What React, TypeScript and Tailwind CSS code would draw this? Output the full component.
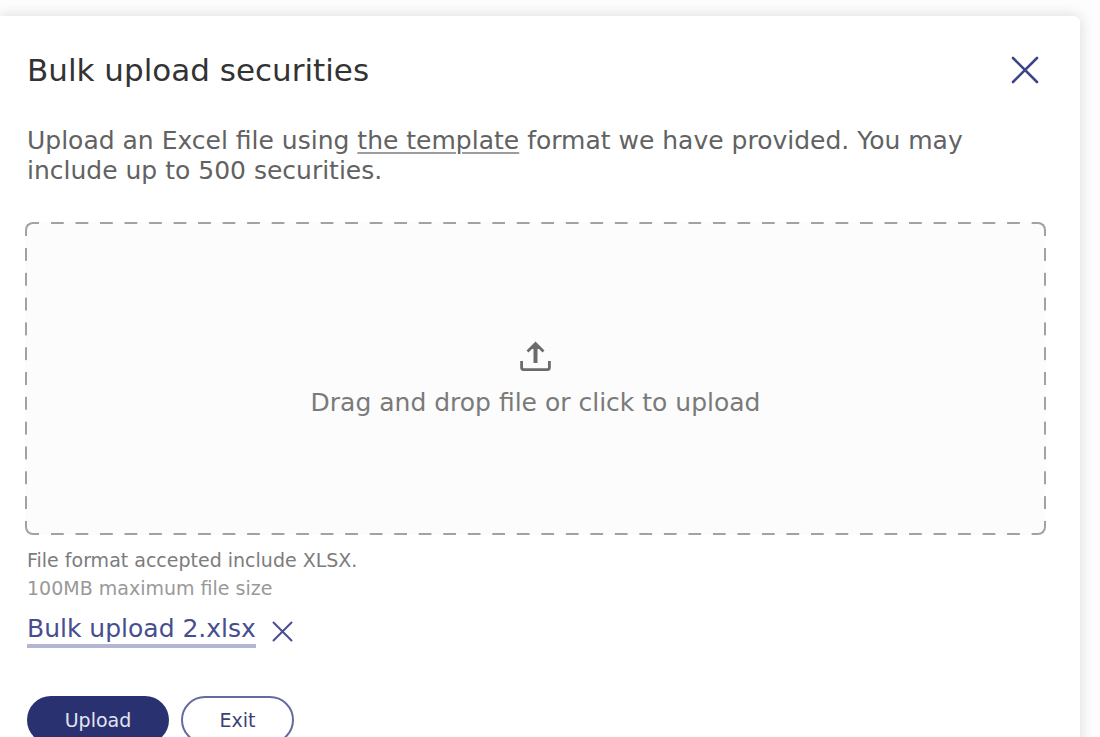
import React from "react";

function CrossIcon({ className }: { className: string }) {
  return (
    <svg viewBox="0 0 28 28" fill="none" stroke="currentColor" className={className} aria-hidden="true">
      <path d="M2 2L26 26M26 2L2 26" strokeWidth="2.6" strokeLinecap="round" />
    </svg>
  );
}

function UploadIcon() {
  return (
    <svg
      viewBox="0 0 32 32"
      fill="none"
      stroke="currentColor"
      strokeWidth="2.8"
      className="h-8 w-8 text-[#6b6b6b]"
      aria-hidden="true"
    >
      <path d="M1.6 21V27.5Q1.6 29.6 3.7 29.6H27.3Q29.4 29.6 29.4 27.5V21" />
      <path d="M15.5 23V4" strokeWidth="4" />
      <path d="M7.5 11.5L15.5 3.5L23.5 11.5" />
      <path d="M11 8.5L15.5 3.5L20 8.5Z" fill="currentColor" strokeWidth="1" />
    </svg>
  );
}

function DashedOutline() {
  return (
    <span aria-hidden="true" className="pointer-events-none absolute inset-0">
      <span className="absolute top-0 left-0 h-[14px] w-[14px] rounded-tl-lg border-t-2 border-l-2 border-[#a2a2a2]" />
      <span className="absolute top-0 right-0 h-[14px] w-[14px] rounded-tr-lg border-t-2 border-r-2 border-[#a2a2a2]" />
      <span className="absolute bottom-0 left-0 h-[14px] w-[14px] rounded-bl-lg border-b-2 border-l-2 border-[#a2a2a2]" />
      <span className="absolute right-0 bottom-0 h-[14px] w-[14px] rounded-br-lg border-b-2 border-r-2 border-[#a2a2a2]" />
      <span className="absolute top-0 right-[14px] left-[26px] h-[2px] bg-[linear-gradient(to_right,#a2a2a2_52%,transparent_52%)] bg-[length:2.5%_100%]" />
      <span className="absolute right-[14px] bottom-0 left-[26px] h-[2px] bg-[linear-gradient(to_right,#a2a2a2_52%,transparent_52%)] bg-[length:2.5%_100%]" />
      <span className="absolute top-[26px] bottom-[14px] left-0 w-[2px] bg-[linear-gradient(to_bottom,#a2a2a2_52%,transparent_52%)] bg-[length:100%_25px] bg-repeat-round" />
      <span className="absolute top-[26px] right-0 bottom-[14px] w-[2px] bg-[linear-gradient(to_bottom,#a2a2a2_52%,transparent_52%)] bg-[length:100%_25px] bg-repeat-round" />
    </span>
  );
}

export default function App() {
  return (
    <div className="h-screen overflow-hidden bg-[#fdfdfd] pt-4 pr-5 font-['DejaVu_Sans','Liberation_Sans',sans-serif]">
      <main
        role="dialog"
        aria-labelledby="dialog-title"
        className="rounded-tr-md bg-white pt-9 pr-[34px] pb-10 pl-[25px] shadow-[0_0_14px_1px_rgba(0,0,0,0.13)]"
      >
        <header className="flex items-center justify-between pr-[7px] pl-[2px]">
          <h1 id="dialog-title" className="text-[31px] leading-9 text-[#333333]">
            Bulk upload securities
          </h1>
          <button type="button" aria-label="Close" className="text-[#3d4489]">
            <CrossIcon className="h-7 w-7" />
          </button>
        </header>

        <p className="mt-[38px] pl-[2px] text-[25px] leading-[30px] text-[#626262]">
          Upload an Excel file using{" "}
          <a href="#template" className="underline decoration-[#9c9c9c] decoration-2 underline-offset-3">
            the template
          </a>{" "}
          format we have provided. You may include up to 500 securities.
        </p>

        <label className="relative mt-9 flex h-[313px] cursor-pointer flex-col items-center justify-center gap-4 rounded-lg bg-[#fcfcfc] text-[25px] leading-[30px] text-[#7a7a7a]">
          <input type="file" accept=".xlsx" className="sr-only" />
          <DashedOutline />
          <UploadIcon />
          <span>Drag and drop file or click to upload</span>
        </label>

        <div className="mt-[11px] pl-[2px] text-[19px] leading-7">
          <p className="text-[#7c7c7c]">File format accepted include XLSX.</p>
          <p className="text-[#999999]">100MB maximum file size</p>
        </div>

        <div className="mt-3 flex items-center gap-4 pl-[2px] text-[#474e8f]">
          <a href="#file" className="border-b-4 border-[#b3b5d2] text-[25px] leading-[30px]">
            Bulk upload 2.xlsx
          </a>
          <button type="button" aria-label="Remove file">
            <CrossIcon className="h-[21px] w-[21px]" />
          </button>
        </div>

        <div className="mt-12 flex gap-3 pl-[2px] text-[19px]">
          <button type="button" className="h-12 w-[142px] rounded-full bg-[#2a3170] text-[#e2e4f2]">
            Upload
          </button>
          <button
            type="button"
            className="h-12 w-[113px] rounded-full border-2 border-[#656b9f] bg-white text-[#3c4276]"
          >
            Exit
          </button>
        </div>
      </main>
    </div>
  );
}
